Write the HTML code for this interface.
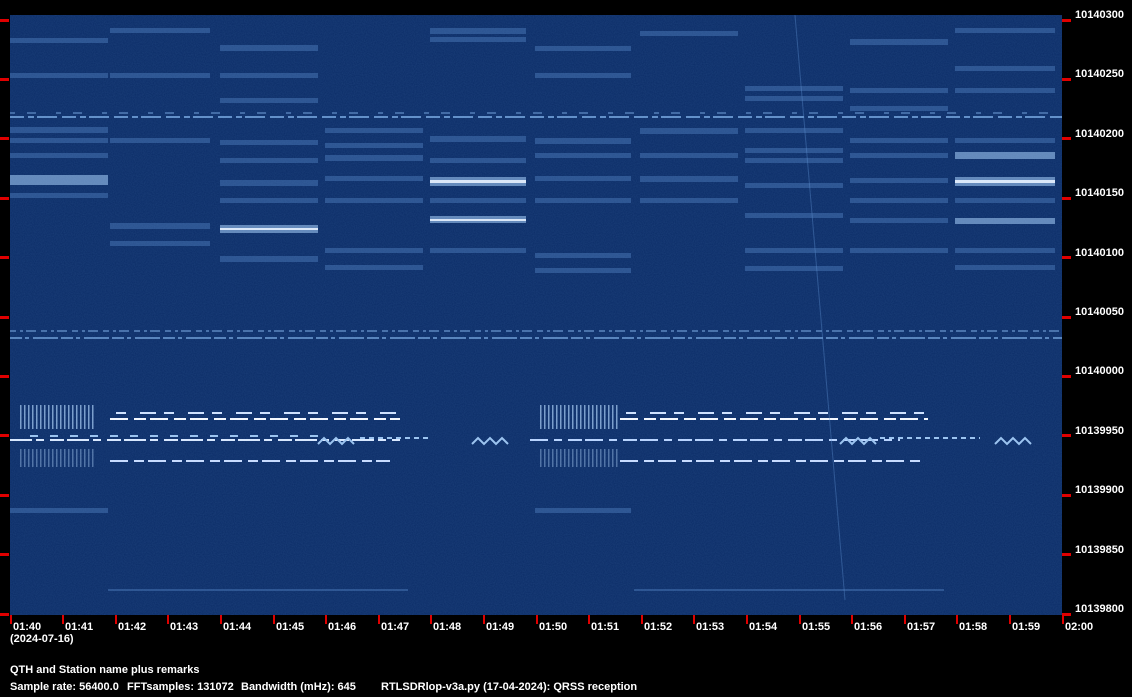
<!DOCTYPE html>
<html><head><meta charset="utf-8"><style>
html,body{margin:0;padding:0;background:#000;width:1132px;height:697px;overflow:hidden}
svg{display:block}
text{font-family:"Liberation Sans",sans-serif;font-weight:bold;font-size:11px;fill:#fff}
</style></head><body>
<svg width="1132" height="697" viewBox="0 0 1132 697">
<defs>
<filter id="n" x="0" y="0" width="100%" height="100%">
<feTurbulence type="fractalNoise" baseFrequency="0.9" numOctaves="1" seed="3" result="t"/>
<feColorMatrix in="t" type="matrix" values="0 0 0 0 0.08  0 0 0 0 0.2  0 0 0 0 0.45  0 0 0 0.25 0"/>
</filter>
<pattern id="v" width="4" height="10" patternUnits="userSpaceOnUse"><rect width="1.5" height="10" fill="#a8ccf4"/></pattern>
</defs>
<rect x="10" y="15" width="1052" height="600" fill="#0a2b66"/>
<rect x="10" y="15" width="1052" height="600" filter="url(#n)"/>
<g fill="#5d8fd0" opacity="0.38">
<rect x="10" y="38" width="98" height="5"/><rect x="10" y="73" width="98" height="5"/><rect x="10" y="127" width="98" height="6"/><rect x="10" y="138" width="98" height="5"/><rect x="10" y="153" width="98" height="5"/><rect x="10" y="193" width="98" height="5"/><rect x="10" y="508" width="98" height="5"/>
<rect x="110" y="28" width="100" height="5"/><rect x="110" y="73" width="100" height="5"/><rect x="110" y="138" width="100" height="5"/><rect x="110" y="223" width="100" height="6"/><rect x="110" y="241" width="100" height="5"/>
<rect x="220" y="45" width="98" height="6"/><rect x="220" y="73" width="98" height="5"/><rect x="220" y="98" width="98" height="5"/><rect x="220" y="140" width="98" height="5"/><rect x="220" y="158" width="98" height="5"/><rect x="220" y="180" width="98" height="6"/><rect x="220" y="198" width="98" height="5"/><rect x="220" y="256" width="98" height="6"/>
<rect x="325" y="128" width="98" height="5"/><rect x="325" y="143" width="98" height="5"/><rect x="325" y="155" width="98" height="6"/><rect x="325" y="176" width="98" height="5"/><rect x="325" y="198" width="98" height="5"/><rect x="325" y="248" width="98" height="5"/><rect x="325" y="265" width="98" height="5"/>
<rect x="430" y="28" width="96" height="6"/><rect x="430" y="37" width="96" height="5"/><rect x="430" y="136" width="96" height="6"/><rect x="430" y="158" width="96" height="5"/><rect x="430" y="198" width="96" height="5"/><rect x="430" y="248" width="96" height="5"/>
<rect x="535" y="46" width="96" height="5"/><rect x="535" y="73" width="96" height="5"/><rect x="535" y="138" width="96" height="6"/><rect x="535" y="153" width="96" height="5"/><rect x="535" y="176" width="96" height="5"/><rect x="535" y="198" width="96" height="5"/><rect x="535" y="253" width="96" height="5"/><rect x="535" y="268" width="96" height="5"/><rect x="535" y="508" width="96" height="5"/>
<rect x="640" y="31" width="98" height="5"/><rect x="640" y="128" width="98" height="6"/><rect x="640" y="153" width="98" height="5"/><rect x="640" y="176" width="98" height="6"/><rect x="640" y="198" width="98" height="5"/>
<rect x="745" y="86" width="98" height="5"/><rect x="745" y="96" width="98" height="5"/><rect x="745" y="128" width="98" height="5"/><rect x="745" y="148" width="98" height="5"/><rect x="745" y="158" width="98" height="5"/><rect x="745" y="183" width="98" height="5"/><rect x="745" y="213" width="98" height="5"/><rect x="745" y="248" width="98" height="5"/><rect x="745" y="266" width="98" height="5"/>
<rect x="850" y="39" width="98" height="6"/><rect x="850" y="88" width="98" height="5"/><rect x="850" y="106" width="98" height="5"/><rect x="850" y="138" width="98" height="5"/><rect x="850" y="153" width="98" height="5"/><rect x="850" y="178" width="98" height="5"/><rect x="850" y="198" width="98" height="5"/><rect x="850" y="218" width="98" height="5"/><rect x="850" y="248" width="98" height="5"/>
<rect x="955" y="28" width="100" height="5"/><rect x="955" y="66" width="100" height="5"/><rect x="955" y="88" width="100" height="5"/><rect x="955" y="138" width="100" height="5"/><rect x="955" y="198" width="100" height="5"/><rect x="955" y="248" width="100" height="5"/><rect x="955" y="265" width="100" height="5"/>
<rect x="108" y="589" width="300" height="2"/><rect x="634" y="589" width="310" height="2"/>
</g>
<g fill="#9cc4f0" opacity="0.6">
<rect x="10" y="175" width="98" height="10"/><rect x="220" y="225" width="98" height="8"/><rect x="430" y="177" width="96" height="9"/><rect x="430" y="216" width="96" height="7"/><rect x="955" y="152" width="100" height="7"/><rect x="955" y="177" width="100" height="9"/><rect x="955" y="218" width="100" height="6"/>
</g>
<g fill="#e8f2ff" opacity="0.9"><rect x="430" y="180" width="96" height="3"/><rect x="955" y="180" width="100" height="3"/><rect x="430" y="219" width="96" height="2"/><rect x="220" y="228" width="98" height="2"/></g>
<g stroke="#7fb0e8" stroke-width="2" fill="none">
<line x1="10" y1="117" x2="1062" y2="117" stroke-dasharray="14 4 6 3 20 5" opacity="0.75"/>
<line x1="10" y1="113" x2="1062" y2="113" stroke-dasharray="5 12 9 20" opacity="0.45"/>
<line x1="10" y1="331" x2="1062" y2="331" stroke-dasharray="6 4 3 3 10 5" opacity="0.5"/>
<line x1="10" y1="338" x2="1062" y2="338" stroke-dasharray="12 3 4 4 25 3" opacity="0.65"/>
</g>
<g fill="none" stroke-width="2">
<line x1="110" y1="419" x2="400" y2="419" stroke="#f4f8ff" stroke-dasharray="18 6 12 4"/>
<line x1="116" y1="413" x2="400" y2="413" stroke="#cfe2ff" stroke-dasharray="10 14 16 8"/>
<line x1="10" y1="440" x2="400" y2="440" stroke="#d8e8ff" stroke-dasharray="22 4 8 6 14 3"/>
<line x1="30" y1="436" x2="320" y2="436" stroke="#9cc4f0" stroke-dasharray="8 12"/>
<polyline points="318,444 324,438 330,444 336,438 342,444 348,438 354,444" stroke="#9cc4f0"/>
<line x1="360" y1="438" x2="430" y2="438" stroke="#9cc4f0" stroke-dasharray="5 4"/>
<polyline points="472,444 478,438 484,444 490,438 496,444 502,438 508,444" stroke="#9cc4f0"/>
<line x1="110" y1="461" x2="390" y2="461" stroke="#c8dcff" stroke-dasharray="18 6 10 4"/>
<line x1="620" y1="419" x2="928" y2="419" stroke="#f4f8ff" stroke-dasharray="18 6 12 4"/>
<line x1="626" y1="413" x2="928" y2="413" stroke="#cfe2ff" stroke-dasharray="10 14 16 8"/>
<line x1="530" y1="440" x2="900" y2="440" stroke="#b8d4ff" stroke-dasharray="18 6 8 6 14 3"/>
<polyline points="840,444 846,438 852,444 858,438 864,444 870,438 876,444" stroke="#9cc4f0"/>
<line x1="880" y1="438" x2="980" y2="438" stroke="#9cc4f0" stroke-dasharray="5 4"/>
<polyline points="995,444 1001,438 1007,444 1013,438 1019,444 1025,438 1031,444" stroke="#9cc4f0"/>
<line x1="620" y1="461" x2="920" y2="461" stroke="#c8dcff" stroke-dasharray="18 6 10 4"/>
</g>
<g opacity="0.7">
<rect x="18" y="405" width="78" height="24" fill="url(#v)"/><rect x="18" y="449" width="78" height="18" fill="url(#v)" opacity="0.6"/>
<rect x="540" y="405" width="78" height="24" fill="url(#v)"/><rect x="540" y="449" width="78" height="18" fill="url(#v)" opacity="0.6"/>
</g>
<line x1="795" y1="15" x2="845" y2="600" stroke="#5d8fd0" stroke-width="1" opacity="0.4"/>
<g fill="#e00000">
<rect x="0" y="19" width="9" height="3"/><rect x="0" y="78" width="9" height="3"/><rect x="0" y="137" width="9" height="3"/><rect x="0" y="197" width="9" height="3"/><rect x="0" y="256" width="9" height="3"/><rect x="0" y="316" width="9" height="3"/><rect x="0" y="375" width="9" height="3"/><rect x="0" y="434" width="9" height="3"/><rect x="0" y="494" width="9" height="3"/><rect x="0" y="553" width="9" height="3"/><rect x="0" y="613" width="9" height="3"/>
<rect x="1062" y="19" width="9" height="3"/><rect x="1062" y="78" width="9" height="3"/><rect x="1062" y="137" width="9" height="3"/><rect x="1062" y="197" width="9" height="3"/><rect x="1062" y="256" width="9" height="3"/><rect x="1062" y="316" width="9" height="3"/><rect x="1062" y="375" width="9" height="3"/><rect x="1062" y="434" width="9" height="3"/><rect x="1062" y="494" width="9" height="3"/><rect x="1062" y="553" width="9" height="3"/><rect x="1062" y="613" width="9" height="3"/>
<rect x="10" y="615" width="2" height="9"/><rect x="62" y="615" width="2" height="9"/><rect x="115" y="615" width="2" height="9"/><rect x="167" y="615" width="2" height="9"/><rect x="220" y="615" width="2" height="9"/><rect x="273" y="615" width="2" height="9"/><rect x="325" y="615" width="2" height="9"/><rect x="378" y="615" width="2" height="9"/><rect x="430" y="615" width="2" height="9"/><rect x="483" y="615" width="2" height="9"/><rect x="536" y="615" width="2" height="9"/><rect x="588" y="615" width="2" height="9"/><rect x="641" y="615" width="2" height="9"/><rect x="693" y="615" width="2" height="9"/><rect x="746" y="615" width="2" height="9"/><rect x="799" y="615" width="2" height="9"/><rect x="851" y="615" width="2" height="9"/><rect x="904" y="615" width="2" height="9"/><rect x="956" y="615" width="2" height="9"/><rect x="1009" y="615" width="2" height="9"/><rect x="1062" y="615" width="2" height="9"/>
</g>
<g>
<text x="1075" y="18">10140300</text><text x="1075" y="77">10140250</text><text x="1075" y="137">10140200</text><text x="1075" y="196">10140150</text><text x="1075" y="256">10140100</text><text x="1075" y="315">10140050</text><text x="1075" y="374">10140000</text><text x="1075" y="434">10139950</text><text x="1075" y="493">10139900</text><text x="1075" y="553">10139850</text><text x="1075" y="612">10139800</text>
<text x="13" y="630">01:40</text><text x="65" y="630">01:41</text><text x="118" y="630">01:42</text><text x="170" y="630">01:43</text><text x="223" y="630">01:44</text><text x="276" y="630">01:45</text><text x="328" y="630">01:46</text><text x="381" y="630">01:47</text><text x="433" y="630">01:48</text><text x="486" y="630">01:49</text><text x="539" y="630">01:50</text><text x="591" y="630">01:51</text><text x="644" y="630">01:52</text><text x="696" y="630">01:53</text><text x="749" y="630">01:54</text><text x="802" y="630">01:55</text><text x="854" y="630">01:56</text><text x="907" y="630">01:57</text><text x="959" y="630">01:58</text><text x="1012" y="630">01:59</text><text x="1065" y="630">02:00</text>
<text x="10" y="642">(2024-07-16)</text>
<text x="10" y="673">QTH and Station name plus remarks</text>
<text x="10" y="690">Sample rate: 56400.0</text><text x="127" y="690">FFTsamples: 131072</text><text x="241" y="690">Bandwidth (mHz): 645</text><text x="381" y="690">RTLSDRlop-v3a.py (17-04-2024): QRSS reception</text>
</g>
</svg>
</body></html>
